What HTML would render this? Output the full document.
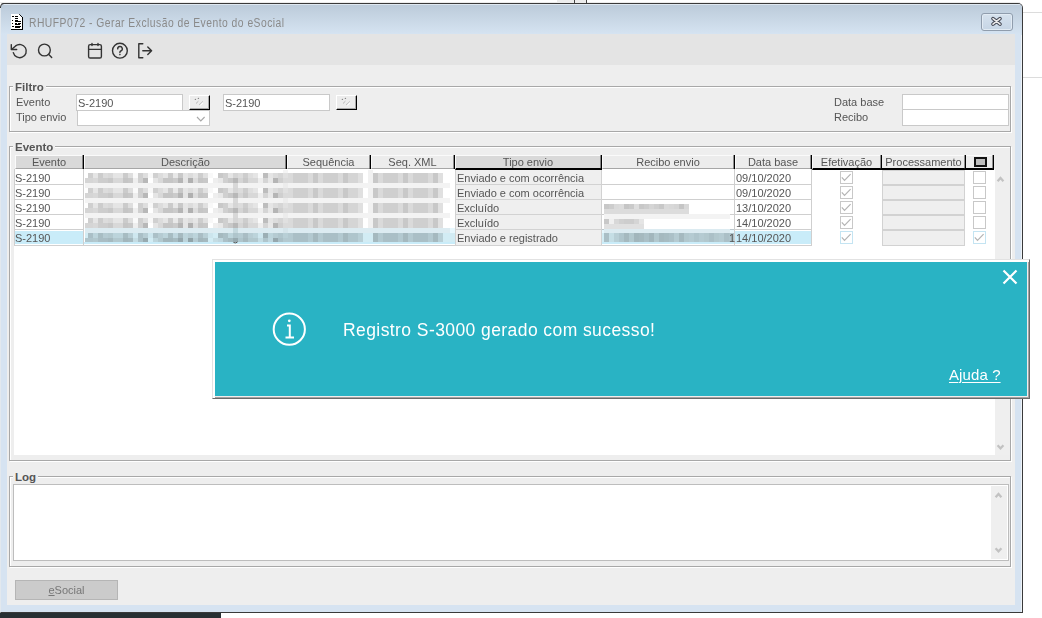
<!DOCTYPE html>
<html><head><meta charset="utf-8">
<style>
*{margin:0;padding:0;box-sizing:border-box}
html,body{width:1042px;height:618px;overflow:hidden;background:#fff;font-family:"Liberation Sans",sans-serif;position:relative}
div,span{position:absolute}
.t{font-size:11px;color:#555;white-space:nowrap;line-height:13px}
.b{font-weight:bold}
.ln{background:#a8a8a8}
.wl{background:#fff}
.inp{background:#fff;border:1px solid #c9c9c9}
.hd{z-index:1;top:155px;height:14px;background:#d9d9d9;border-top:1px solid #fafafa;border-left:1px solid #fafafa;border-bottom:1px solid #a6a6a6;box-shadow:inset -1px 0 0 #bdbdbd}
.hl{background:#ececec}
.sep{z-index:2;top:155px;width:1px;height:14px;background:#000;box-shadow:-0.5px 0 0 #333}
.hx{z-index:3;top:156px;height:14px;line-height:13px;text-align:center}
.cell{line-height:13px}
</style></head><body>
<!-- outside bits -->
<div style="left:0;top:2px;width:1020px;height:1px;background:#ececec"></div>
<div style="left:1022px;top:12px;width:20px;height:1px;background:#dcdcdc"></div>
<div style="left:1022px;top:77px;width:20px;height:1px;background:#dcdcdc"></div>
<div style="left:557px;top:0;width:17px;height:3px;background:#ececec"></div>
<div style="left:574px;top:0;width:1px;height:3px;background:#444"></div>
<div style="left:575px;top:0;width:11px;height:3px;background:#ececec"></div>
<div style="left:586px;top:0;width:1px;height:3px;background:#444"></div>
<div style="left:0;top:612px;width:221px;height:6px;background:#283033"></div>

<!-- window -->
<div style="left:0;top:3px;width:1023px;height:610px;border:1px solid #3a3a3a;border-left-color:#e2e8ee;border-radius:4px 5px 0 0;background:#d6e3f1;overflow:hidden;box-shadow:inset -1px 0 0 #eef3f8">
  <div style="left:0;top:0;width:1021px;height:31px;background:linear-gradient(#bccbda,#d6e4f2);border-top:1px solid #dfe8f1"></div>
</div>
<svg style="position:absolute;left:0;top:0" width="8" height="10" viewBox="0 0 8 10"><path d="M0.5 8 L0.5 7 Q0.5 3.5 4 3.5 L6 3.5" fill="none" stroke="#3a3a3a" stroke-width="1"/></svg>
<!-- title icon -->
<svg style="position:absolute;left:0;top:0" width="30" height="34" viewBox="0 0 30 34" shape-rendering="crispEdges">
  <path d="M11 14 H19 L22 17 V29 H11 Z" fill="#fff"/>
  <path d="M19.2 14.2 L22.8 17.8" stroke="#111" stroke-width="1" shape-rendering="auto"/>
  <rect x="22" y="17" width="1" height="13" fill="#000"/>
  <rect x="11" y="29" width="12" height="1" fill="#000"/>
  <rect x="12" y="16" width="2" height="1" fill="#000"/><rect x="15" y="16" width="3" height="1" fill="#000"/>
  <rect x="15" y="18" width="3" height="1" fill="#000"/>
  <rect x="12" y="20" width="1" height="1" fill="#000"/><rect x="15" y="20" width="3" height="2" fill="#000"/><rect x="18" y="21" width="3" height="1" fill="#000"/>
  <rect x="12" y="23" width="1" height="1" fill="#000"/><rect x="15" y="23" width="2" height="2" fill="#000"/><rect x="17" y="24" width="1" height="1" fill="#000"/><rect x="18" y="23" width="3" height="1" fill="#000"/><rect x="18" y="24" width="2" height="1" fill="#000"/>
  <rect x="12" y="26" width="2" height="1" fill="#000"/><rect x="15" y="26" width="6" height="1" fill="#000"/><rect x="15" y="27" width="5" height="1" fill="#000"/>
</svg>
<div class="t" style="left:29px;top:16px;font-size:12px;line-height:14px;color:#8a8a8a;letter-spacing:0.56px;transform:scaleX(0.86);transform-origin:0 0">RHUFP072 - Gerar Exclusão de Evento do eSocial</div>
<!-- close btn -->
<div style="left:981px;top:13px;width:32px;height:18px;border:1px solid #909dad;border-radius:3px;background:linear-gradient(#d6e2ee,#c6d5e5);box-shadow:inset 0 0 0 1px #e2ebf4"></div>
<svg style="position:absolute;left:990px;top:16px" width="14" height="12" viewBox="0 0 14 12">
  <path d="M3 2.6 L10 8.2 M10 2.6 L3 8.2" stroke="#3f4350" stroke-width="3.6" stroke-linecap="round"/>
  <path d="M3 2.6 L10 8.2 M10 2.6 L3 8.2" stroke="#ebebeb" stroke-width="1.6" stroke-linecap="round"/>
</svg>
<!-- content -->
<div style="left:7px;top:34px;width:1008px;height:571px;background:#eeeeee"></div>
<div style="left:7px;top:34px;width:1008px;height:31px;background:#e4e4e4"></div>
<!-- toolbar icons -->
<svg style="position:absolute;left:0;top:34px" width="170" height="31" viewBox="0 34 170 31">
  <g fill="none" stroke="#333" stroke-width="1.4" stroke-linecap="round" stroke-linejoin="round">
    <path d="M13.3 52.7 A6.6 6.6 0 1 0 15.6 45.9 L11.8 49.3"/>
    <path d="M11.3 44.6 V49.5 H16.7"/>
    <circle cx="44.4" cy="50" r="5.9"/>
    <path d="M48.8 54.6 L51.7 57.6"/>
    <rect x="88.6" y="44.6" width="12.8" height="13.4" rx="1.6"/>
    <path d="M88.6 49.4 H101.4 M92 43.4 V45.6 M98 43.4 V45.6"/>
    <circle cx="119.9" cy="50.7" r="7.4"/>
    <path d="M117.7 48.9 A2.3 2.3 0 1 1 120.8 51 Q119.9 51.4 119.9 52.6"/>
    <path d="M142.8 43.8 H138.8 V57.8 H142.8"/>
    <path d="M142.8 50.7 H151.6 M147.8 47 L151.6 50.7 L147.8 54.4"/>
  </g>
  <circle cx="119.9" cy="54.6" r="0.8" fill="#333"/>
</svg>

<!-- Filtro group -->
<div style="left:9px;top:86px;width:1002px;height:46px;border:1px solid #a8a8a8;box-shadow:inset 1px 1px 0 #fff, 1px 1px 0 #fff"></div>
<div class="t b" style="left:13px;top:81px;background:#eeeeee;padding:0 2px;font-size:11.5px">Filtro</div>
<div class="t" style="left:16px;top:96px">Evento</div>
<div class="t" style="left:16px;top:111px">Tipo envio</div>
<div class="inp" style="left:76px;top:94px;width:107px;height:17px"></div>
<div class="t" style="left:78px;top:97px">S-2190</div>
<div class="inp" style="left:77px;top:110px;width:133px;height:16px"></div>
<svg style="position:absolute;left:196px;top:116px" width="11" height="7"><path d="M1 1 L4.8 5 L8.6 1" fill="none" stroke="#a8a8a8" stroke-width="1.1"/></svg>
<div style="left:189px;top:95px;width:21px;height:15px;background:#ececec;border-top:1px solid #fff;border-left:1px solid #fff;border-right:1px solid #000;border-bottom:1px solid #000;box-shadow:inset -1px -1px 0 #a8a8a8"></div>
<div class="inp" style="left:223px;top:94px;width:107px;height:17px"></div>
<div class="t" style="left:225px;top:97px">S-2190</div>
<div style="left:336px;top:95px;width:21px;height:15px;background:#ececec;border-top:1px solid #fff;border-left:1px solid #fff;border-right:1px solid #000;border-bottom:1px solid #000;box-shadow:inset -1px -1px 0 #a8a8a8"></div>
<svg style="position:absolute;left:193px;top:97px" width="12" height="10" viewBox="0 0 12 10"><circle cx="2.4" cy="2.4" r="0.7" fill="#888"/><circle cx="5.4" cy="1.4" r="0.7" fill="#888"/><path d="M3 6.5 L5.6 4 M6.4 7.5 L9.6 4.5" stroke="#999" stroke-width="0.9" stroke-dasharray="1 0.6"/><path d="M7.5 8.5 L10 6" stroke="#fff" stroke-width="0.9"/></svg>
<svg style="position:absolute;left:340px;top:97px" width="12" height="10" viewBox="0 0 12 10"><circle cx="2.4" cy="2.4" r="0.7" fill="#888"/><circle cx="5.4" cy="1.4" r="0.7" fill="#888"/><path d="M3 6.5 L5.6 4 M6.4 7.5 L9.6 4.5" stroke="#999" stroke-width="0.9" stroke-dasharray="1 0.6"/><path d="M7.5 8.5 L10 6" stroke="#fff" stroke-width="0.9"/></svg>
<div class="t" style="left:834px;top:96px">Data base</div>
<div class="t" style="left:834px;top:111px">Recibo</div>
<div class="inp" style="left:902px;top:94px;width:107px;height:16px"></div>
<div class="inp" style="left:902px;top:109px;width:107px;height:17px"></div>

<!-- Evento group -->
<div style="left:9px;top:146px;width:1002px;height:315px;border:1px solid #a8a8a8;box-shadow:inset 1px 1px 0 #fff, 1px 1px 0 #fff"></div>
<div class="t b" style="left:13px;top:141px;background:#eeeeee;padding:0 2px;font-size:11.5px">Evento</div>
<!-- table white area -->
<div style="left:14px;top:169px;width:981px;height:286px;background:#fff"></div>
<!-- scrollbar -->
<div style="left:995px;top:170px;width:15px;height:285px;background:#efefef"></div>
<svg style="position:absolute;left:996px;top:175px" width="10" height="9"><path d="M1.6 6.2 L4.5 3 L7.4 6.2" fill="none" stroke="#c2c2c2" stroke-width="2.3"/></svg>
<svg style="position:absolute;left:996px;top:443px" width="10" height="9"><path d="M1.6 2.2 L4.5 5.4 L7.4 2.2" fill="none" stroke="#c2c2c2" stroke-width="2.3"/></svg>

<!-- header -->
<div class="hd" style="left:15px;width:69px"></div>
<div class="hd" style="left:84px;width:203px"></div>
<div class="hd hl" style="left:287px;width:84px"></div>
<div class="hd hl" style="left:371px;width:84px"></div>
<div class="hd" style="left:455px;width:147px;height:15px;border-bottom:2px solid #000"></div>
<div class="hd hl" style="left:602px;width:133px"></div>
<div class="hd hl" style="left:735px;width:77px"></div>
<div class="hd hl" style="left:812px;width:182px;height:15px;border-bottom:2px solid #000"></div>
<div class="sep" style="left:83px"></div>
<div class="sep" style="left:286px"></div>
<div class="sep" style="left:370px"></div>
<div class="sep" style="left:454px"></div>
<div class="sep" style="left:601px"></div>
<div class="sep" style="left:734px"></div>
<div class="sep" style="left:811px"></div>
<div class="sep" style="left:881px"></div>
<div class="sep" style="left:965px"></div>
<div class="sep" style="left:993px"></div>
<div style="z-index:3;left:974px;top:157px;width:13px;height:10px;border:2px solid #111;background:#bdbdbd"></div>
<div class="t hx" style="left:15px;width:68px">Evento</div>
<div class="t hx" style="left:85px;width:201px">Descrição</div>
<div class="t hx" style="left:287px;width:83px">Sequência</div>
<div class="t hx" style="left:371px;width:83px">Seq. XML</div>
<div class="t hx" style="left:455px;width:146px">Tipo envio</div>
<div class="t hx" style="left:602px;width:132px">Recibo envio</div>
<div class="t hx" style="left:735px;width:76px">Data base</div>
<div class="t hx" style="left:812px;width:69px">Efetivação</div>
<div class="t hx" style="left:882px;width:83px">Processamento</div>

<!--ROWS-->
<svg style="position:absolute;left:0;top:0" width="1042" height="260" viewBox="0 0 1042 260">
<rect x="14" y="184" width="70" height="1" fill="#cfcfcf"/>
<rect x="602" y="184" width="210" height="1" fill="#cfcfcf"/>
<rect x="14" y="199" width="70" height="1" fill="#cfcfcf"/>
<rect x="602" y="199" width="210" height="1" fill="#cfcfcf"/>
<rect x="14" y="214" width="70" height="1" fill="#cfcfcf"/>
<rect x="602" y="214" width="210" height="1" fill="#cfcfcf"/>
<rect x="14" y="229" width="70" height="1" fill="#cfcfcf"/>
<rect x="602" y="229" width="210" height="1" fill="#cfcfcf"/>
<rect x="14" y="245" width="70" height="1" fill="#cfcfcf"/>
<rect x="602" y="245" width="210" height="1" fill="#cfcfcf"/>
<rect x="14" y="169" width="1" height="77" fill="#cfcfcf"/>
<rect x="83" y="169" width="1" height="77" fill="#cfcfcf"/>
<rect x="601" y="169" width="1" height="77" fill="#cfcfcf"/>
<rect x="734" y="169" width="1" height="77" fill="#cfcfcf"/>
<rect x="811" y="169" width="1" height="77" fill="#cfcfcf"/>
<rect x="368" y="170" width="5" height="59" fill="#f1f1f1"/>
<rect x="283" y="170" width="5" height="59" fill="#f4f4f4"/>
<rect x="85" y="173" width="3" height="5" fill="#ffffff"/>
<rect x="88" y="173" width="5" height="5" fill="#cfcfcf"/>
<rect x="93" y="173" width="5" height="5" fill="#e5e5e5"/>
<rect x="98" y="173" width="5" height="5" fill="#cccccc"/>
<rect x="103" y="173" width="5" height="5" fill="#dcdcdc"/>
<rect x="108" y="173" width="5" height="5" fill="#d8d8d8"/>
<rect x="113" y="173" width="5" height="5" fill="#e5e5e5"/>
<rect x="118" y="173" width="5" height="5" fill="#e5e5e5"/>
<rect x="123" y="173" width="5" height="5" fill="#cbcbcb"/>
<rect x="128" y="173" width="5" height="5" fill="#dedede"/>
<rect x="133" y="173" width="5" height="5" fill="#fafafa"/>
<rect x="138" y="173" width="5" height="5" fill="#cfcfcf"/>
<rect x="143" y="173" width="5" height="5" fill="#dedede"/>
<rect x="148" y="173" width="5" height="5" fill="#f8f8f8"/>
<rect x="153" y="173" width="5" height="5" fill="#d0d0d0"/>
<rect x="158" y="173" width="5" height="5" fill="#dcdcdc"/>
<rect x="163" y="173" width="5" height="5" fill="#e5e5e5"/>
<rect x="168" y="173" width="5" height="5" fill="#cbcbcb"/>
<rect x="173" y="173" width="5" height="5" fill="#e8e8e8"/>
<rect x="178" y="173" width="5" height="5" fill="#c8c8c8"/>
<rect x="183" y="173" width="5" height="5" fill="#e5e5e5"/>
<rect x="188" y="173" width="5" height="5" fill="#dcdcdc"/>
<rect x="193" y="173" width="5" height="5" fill="#e5e5e5"/>
<rect x="198" y="173" width="5" height="5" fill="#cdcdcd"/>
<rect x="203" y="173" width="5" height="5" fill="#e0e0e0"/>
<rect x="208" y="173" width="5" height="5" fill="#f8f8f8"/>
<rect x="213" y="173" width="5" height="5" fill="#ffffff"/>
<rect x="218" y="173" width="5" height="5" fill="#c8c8c8"/>
<rect x="223" y="173" width="5" height="5" fill="#cfcfcf"/>
<rect x="228" y="173" width="5" height="5" fill="#e5e5e5"/>
<rect x="233" y="173" width="5" height="5" fill="#d5d5d5"/>
<rect x="238" y="173" width="5" height="5" fill="#dcdcdc"/>
<rect x="243" y="173" width="5" height="5" fill="#cdcdcd"/>
<rect x="248" y="173" width="5" height="5" fill="#dedede"/>
<rect x="253" y="173" width="5" height="5" fill="#e5e5e5"/>
<rect x="258" y="173" width="5" height="5" fill="#fafafa"/>
<rect x="263" y="173" width="5" height="5" fill="#bdbdbd"/>
<rect x="268" y="173" width="5" height="5" fill="#e5e5e5"/>
<rect x="273" y="173" width="5" height="5" fill="#dcdcdc"/>
<rect x="278" y="173" width="5" height="5" fill="#d5d5d5"/>
<rect x="85" y="178" width="3" height="5" fill="#d5d5d5"/>
<rect x="88" y="178" width="5" height="5" fill="#d5d5d5"/>
<rect x="93" y="178" width="5" height="5" fill="#d8d8d8"/>
<rect x="98" y="178" width="5" height="5" fill="#cdcdcd"/>
<rect x="103" y="178" width="5" height="5" fill="#cdcdcd"/>
<rect x="108" y="178" width="5" height="5" fill="#c8c8c8"/>
<rect x="113" y="178" width="5" height="5" fill="#d8d8d8"/>
<rect x="118" y="178" width="5" height="5" fill="#d8d8d8"/>
<rect x="123" y="178" width="5" height="5" fill="#c5c5c5"/>
<rect x="128" y="178" width="5" height="5" fill="#c8c8c8"/>
<rect x="133" y="178" width="5" height="5" fill="#eeeeee"/>
<rect x="138" y="178" width="5" height="5" fill="#d0d0d0"/>
<rect x="143" y="178" width="5" height="5" fill="#b8b8b8"/>
<rect x="148" y="178" width="5" height="5" fill="#ffffff"/>
<rect x="153" y="178" width="5" height="5" fill="#e5e5e5"/>
<rect x="158" y="178" width="5" height="5" fill="#d8d8d8"/>
<rect x="163" y="178" width="5" height="5" fill="#c5c5c5"/>
<rect x="168" y="178" width="5" height="5" fill="#c5c5c5"/>
<rect x="173" y="178" width="5" height="5" fill="#cbcbcb"/>
<rect x="178" y="178" width="5" height="5" fill="#b5b5b5"/>
<rect x="183" y="178" width="5" height="5" fill="#e5e5e5"/>
<rect x="188" y="178" width="5" height="5" fill="#b0b0b0"/>
<rect x="193" y="178" width="5" height="5" fill="#dcdcdc"/>
<rect x="198" y="178" width="5" height="5" fill="#c5c5c5"/>
<rect x="203" y="178" width="5" height="5" fill="#c8c8c8"/>
<rect x="208" y="178" width="5" height="5" fill="#ffffff"/>
<rect x="213" y="178" width="5" height="5" fill="#eeeeee"/>
<rect x="218" y="178" width="5" height="5" fill="#e8e8e8"/>
<rect x="223" y="178" width="5" height="5" fill="#d0d0d0"/>
<rect x="228" y="178" width="5" height="5" fill="#c8c8c8"/>
<rect x="233" y="178" width="5" height="5" fill="#b8b8b8"/>
<rect x="238" y="178" width="5" height="5" fill="#d5d5d5"/>
<rect x="243" y="178" width="5" height="5" fill="#c8c8c8"/>
<rect x="248" y="178" width="5" height="5" fill="#d8d8d8"/>
<rect x="253" y="178" width="5" height="5" fill="#d8d8d8"/>
<rect x="258" y="178" width="5" height="5" fill="#eeeeee"/>
<rect x="263" y="178" width="5" height="5" fill="#d5d5d5"/>
<rect x="268" y="178" width="5" height="5" fill="#e8e8e8"/>
<rect x="273" y="178" width="5" height="5" fill="#b5b5b5"/>
<rect x="278" y="178" width="5" height="5" fill="#cfcfcf"/>
<rect x="283" y="173" width="5" height="5" fill="#e0e0e0"/>
<rect x="283" y="178" width="5" height="5" fill="#dadada"/>
<rect x="288" y="173" width="5" height="10" fill="#dadada"/>
<rect x="293" y="173" width="15" height="10" fill="#cfcfcf"/>
<rect x="308" y="173" width="5" height="10" fill="#dadada"/>
<rect x="313" y="173" width="5" height="10" fill="#c8c8c8"/>
<rect x="318" y="173" width="5" height="10" fill="#dadada"/>
<rect x="323" y="173" width="15" height="10" fill="#cfcfcf"/>
<rect x="338" y="173" width="5" height="10" fill="#dadada"/>
<rect x="343" y="173" width="5" height="10" fill="#c8c8c8"/>
<rect x="348" y="173" width="10" height="10" fill="#d5d5d5"/>
<rect x="358" y="173" width="5" height="10" fill="#e0e0e0"/>
<rect x="373" y="173" width="5" height="10" fill="#c8c8c8"/>
<rect x="378" y="173" width="5" height="10" fill="#dadada"/>
<rect x="383" y="173" width="15" height="10" fill="#cfcfcf"/>
<rect x="398" y="173" width="5" height="10" fill="#dadada"/>
<rect x="403" y="173" width="5" height="10" fill="#c8c8c8"/>
<rect x="408" y="173" width="5" height="10" fill="#dadada"/>
<rect x="413" y="173" width="15" height="10" fill="#cfcfcf"/>
<rect x="428" y="173" width="5" height="10" fill="#dadada"/>
<rect x="433" y="173" width="5" height="10" fill="#c8c8c8"/>
<rect x="438" y="173" width="5" height="10" fill="#e0e0e0"/>
<rect x="85" y="183" width="365" height="5" fill="#f3f3f3"/>
<rect x="233" y="183" width="5" height="5" fill="#d8d8d8"/>
<rect x="283" y="183" width="5" height="5" fill="#ececec"/>
<rect x="85" y="188" width="3" height="5" fill="#ffffff"/>
<rect x="88" y="188" width="5" height="5" fill="#cfcfcf"/>
<rect x="93" y="188" width="5" height="5" fill="#e5e5e5"/>
<rect x="98" y="188" width="5" height="5" fill="#cccccc"/>
<rect x="103" y="188" width="5" height="5" fill="#dcdcdc"/>
<rect x="108" y="188" width="5" height="5" fill="#d8d8d8"/>
<rect x="113" y="188" width="5" height="5" fill="#e5e5e5"/>
<rect x="118" y="188" width="5" height="5" fill="#e5e5e5"/>
<rect x="123" y="188" width="5" height="5" fill="#cbcbcb"/>
<rect x="128" y="188" width="5" height="5" fill="#dedede"/>
<rect x="133" y="188" width="5" height="5" fill="#fafafa"/>
<rect x="138" y="188" width="5" height="5" fill="#cfcfcf"/>
<rect x="143" y="188" width="5" height="5" fill="#dedede"/>
<rect x="148" y="188" width="5" height="5" fill="#f8f8f8"/>
<rect x="153" y="188" width="5" height="5" fill="#d0d0d0"/>
<rect x="158" y="188" width="5" height="5" fill="#dcdcdc"/>
<rect x="163" y="188" width="5" height="5" fill="#e5e5e5"/>
<rect x="168" y="188" width="5" height="5" fill="#cbcbcb"/>
<rect x="173" y="188" width="5" height="5" fill="#e8e8e8"/>
<rect x="178" y="188" width="5" height="5" fill="#c8c8c8"/>
<rect x="183" y="188" width="5" height="5" fill="#e5e5e5"/>
<rect x="188" y="188" width="5" height="5" fill="#dcdcdc"/>
<rect x="193" y="188" width="5" height="5" fill="#e5e5e5"/>
<rect x="198" y="188" width="5" height="5" fill="#cdcdcd"/>
<rect x="203" y="188" width="5" height="5" fill="#e0e0e0"/>
<rect x="208" y="188" width="5" height="5" fill="#f8f8f8"/>
<rect x="213" y="188" width="5" height="5" fill="#ffffff"/>
<rect x="218" y="188" width="5" height="5" fill="#c8c8c8"/>
<rect x="223" y="188" width="5" height="5" fill="#cfcfcf"/>
<rect x="228" y="188" width="5" height="5" fill="#e5e5e5"/>
<rect x="233" y="188" width="5" height="5" fill="#d5d5d5"/>
<rect x="238" y="188" width="5" height="5" fill="#dcdcdc"/>
<rect x="243" y="188" width="5" height="5" fill="#cdcdcd"/>
<rect x="248" y="188" width="5" height="5" fill="#dedede"/>
<rect x="253" y="188" width="5" height="5" fill="#e5e5e5"/>
<rect x="258" y="188" width="5" height="5" fill="#fafafa"/>
<rect x="263" y="188" width="5" height="5" fill="#bdbdbd"/>
<rect x="268" y="188" width="5" height="5" fill="#e5e5e5"/>
<rect x="273" y="188" width="5" height="5" fill="#dcdcdc"/>
<rect x="278" y="188" width="5" height="5" fill="#d5d5d5"/>
<rect x="85" y="193" width="3" height="5" fill="#d5d5d5"/>
<rect x="88" y="193" width="5" height="5" fill="#d5d5d5"/>
<rect x="93" y="193" width="5" height="5" fill="#d8d8d8"/>
<rect x="98" y="193" width="5" height="5" fill="#cdcdcd"/>
<rect x="103" y="193" width="5" height="5" fill="#cdcdcd"/>
<rect x="108" y="193" width="5" height="5" fill="#c8c8c8"/>
<rect x="113" y="193" width="5" height="5" fill="#d8d8d8"/>
<rect x="118" y="193" width="5" height="5" fill="#d8d8d8"/>
<rect x="123" y="193" width="5" height="5" fill="#c5c5c5"/>
<rect x="128" y="193" width="5" height="5" fill="#c8c8c8"/>
<rect x="133" y="193" width="5" height="5" fill="#eeeeee"/>
<rect x="138" y="193" width="5" height="5" fill="#d0d0d0"/>
<rect x="143" y="193" width="5" height="5" fill="#b8b8b8"/>
<rect x="148" y="193" width="5" height="5" fill="#ffffff"/>
<rect x="153" y="193" width="5" height="5" fill="#e5e5e5"/>
<rect x="158" y="193" width="5" height="5" fill="#d8d8d8"/>
<rect x="163" y="193" width="5" height="5" fill="#c5c5c5"/>
<rect x="168" y="193" width="5" height="5" fill="#c5c5c5"/>
<rect x="173" y="193" width="5" height="5" fill="#cbcbcb"/>
<rect x="178" y="193" width="5" height="5" fill="#b5b5b5"/>
<rect x="183" y="193" width="5" height="5" fill="#e5e5e5"/>
<rect x="188" y="193" width="5" height="5" fill="#b0b0b0"/>
<rect x="193" y="193" width="5" height="5" fill="#dcdcdc"/>
<rect x="198" y="193" width="5" height="5" fill="#c5c5c5"/>
<rect x="203" y="193" width="5" height="5" fill="#c8c8c8"/>
<rect x="208" y="193" width="5" height="5" fill="#ffffff"/>
<rect x="213" y="193" width="5" height="5" fill="#eeeeee"/>
<rect x="218" y="193" width="5" height="5" fill="#e8e8e8"/>
<rect x="223" y="193" width="5" height="5" fill="#d0d0d0"/>
<rect x="228" y="193" width="5" height="5" fill="#c8c8c8"/>
<rect x="233" y="193" width="5" height="5" fill="#b8b8b8"/>
<rect x="238" y="193" width="5" height="5" fill="#d5d5d5"/>
<rect x="243" y="193" width="5" height="5" fill="#c8c8c8"/>
<rect x="248" y="193" width="5" height="5" fill="#d8d8d8"/>
<rect x="253" y="193" width="5" height="5" fill="#d8d8d8"/>
<rect x="258" y="193" width="5" height="5" fill="#eeeeee"/>
<rect x="263" y="193" width="5" height="5" fill="#d5d5d5"/>
<rect x="268" y="193" width="5" height="5" fill="#e8e8e8"/>
<rect x="273" y="193" width="5" height="5" fill="#b5b5b5"/>
<rect x="278" y="193" width="5" height="5" fill="#cfcfcf"/>
<rect x="283" y="188" width="5" height="5" fill="#e0e0e0"/>
<rect x="283" y="193" width="5" height="5" fill="#dadada"/>
<rect x="288" y="188" width="5" height="10" fill="#dadada"/>
<rect x="293" y="188" width="15" height="10" fill="#cfcfcf"/>
<rect x="308" y="188" width="5" height="10" fill="#dadada"/>
<rect x="313" y="188" width="5" height="10" fill="#c8c8c8"/>
<rect x="318" y="188" width="5" height="10" fill="#dadada"/>
<rect x="323" y="188" width="15" height="10" fill="#cfcfcf"/>
<rect x="338" y="188" width="5" height="10" fill="#dadada"/>
<rect x="343" y="188" width="5" height="10" fill="#c8c8c8"/>
<rect x="348" y="188" width="10" height="10" fill="#d5d5d5"/>
<rect x="358" y="188" width="5" height="10" fill="#e0e0e0"/>
<rect x="373" y="188" width="5" height="10" fill="#c8c8c8"/>
<rect x="378" y="188" width="5" height="10" fill="#dadada"/>
<rect x="383" y="188" width="15" height="10" fill="#cfcfcf"/>
<rect x="398" y="188" width="5" height="10" fill="#dadada"/>
<rect x="403" y="188" width="5" height="10" fill="#c8c8c8"/>
<rect x="408" y="188" width="5" height="10" fill="#dadada"/>
<rect x="413" y="188" width="15" height="10" fill="#cfcfcf"/>
<rect x="428" y="188" width="5" height="10" fill="#dadada"/>
<rect x="433" y="188" width="5" height="10" fill="#c8c8c8"/>
<rect x="438" y="188" width="5" height="10" fill="#e0e0e0"/>
<rect x="85" y="198" width="365" height="5" fill="#f3f3f3"/>
<rect x="233" y="198" width="5" height="5" fill="#d8d8d8"/>
<rect x="283" y="198" width="5" height="5" fill="#ececec"/>
<rect x="85" y="203" width="3" height="5" fill="#ffffff"/>
<rect x="88" y="203" width="5" height="5" fill="#cfcfcf"/>
<rect x="93" y="203" width="5" height="5" fill="#e5e5e5"/>
<rect x="98" y="203" width="5" height="5" fill="#cccccc"/>
<rect x="103" y="203" width="5" height="5" fill="#dcdcdc"/>
<rect x="108" y="203" width="5" height="5" fill="#d8d8d8"/>
<rect x="113" y="203" width="5" height="5" fill="#e5e5e5"/>
<rect x="118" y="203" width="5" height="5" fill="#e5e5e5"/>
<rect x="123" y="203" width="5" height="5" fill="#cbcbcb"/>
<rect x="128" y="203" width="5" height="5" fill="#dedede"/>
<rect x="133" y="203" width="5" height="5" fill="#fafafa"/>
<rect x="138" y="203" width="5" height="5" fill="#cfcfcf"/>
<rect x="143" y="203" width="5" height="5" fill="#dedede"/>
<rect x="148" y="203" width="5" height="5" fill="#f8f8f8"/>
<rect x="153" y="203" width="5" height="5" fill="#d0d0d0"/>
<rect x="158" y="203" width="5" height="5" fill="#dcdcdc"/>
<rect x="163" y="203" width="5" height="5" fill="#e5e5e5"/>
<rect x="168" y="203" width="5" height="5" fill="#cbcbcb"/>
<rect x="173" y="203" width="5" height="5" fill="#e8e8e8"/>
<rect x="178" y="203" width="5" height="5" fill="#c8c8c8"/>
<rect x="183" y="203" width="5" height="5" fill="#e5e5e5"/>
<rect x="188" y="203" width="5" height="5" fill="#dcdcdc"/>
<rect x="193" y="203" width="5" height="5" fill="#e5e5e5"/>
<rect x="198" y="203" width="5" height="5" fill="#cdcdcd"/>
<rect x="203" y="203" width="5" height="5" fill="#e0e0e0"/>
<rect x="208" y="203" width="5" height="5" fill="#f8f8f8"/>
<rect x="213" y="203" width="5" height="5" fill="#ffffff"/>
<rect x="218" y="203" width="5" height="5" fill="#c8c8c8"/>
<rect x="223" y="203" width="5" height="5" fill="#cfcfcf"/>
<rect x="228" y="203" width="5" height="5" fill="#e5e5e5"/>
<rect x="233" y="203" width="5" height="5" fill="#d5d5d5"/>
<rect x="238" y="203" width="5" height="5" fill="#dcdcdc"/>
<rect x="243" y="203" width="5" height="5" fill="#cdcdcd"/>
<rect x="248" y="203" width="5" height="5" fill="#dedede"/>
<rect x="253" y="203" width="5" height="5" fill="#e5e5e5"/>
<rect x="258" y="203" width="5" height="5" fill="#fafafa"/>
<rect x="263" y="203" width="5" height="5" fill="#bdbdbd"/>
<rect x="268" y="203" width="5" height="5" fill="#e5e5e5"/>
<rect x="273" y="203" width="5" height="5" fill="#dcdcdc"/>
<rect x="278" y="203" width="5" height="5" fill="#d5d5d5"/>
<rect x="85" y="208" width="3" height="5" fill="#d5d5d5"/>
<rect x="88" y="208" width="5" height="5" fill="#d5d5d5"/>
<rect x="93" y="208" width="5" height="5" fill="#d8d8d8"/>
<rect x="98" y="208" width="5" height="5" fill="#cdcdcd"/>
<rect x="103" y="208" width="5" height="5" fill="#cdcdcd"/>
<rect x="108" y="208" width="5" height="5" fill="#c8c8c8"/>
<rect x="113" y="208" width="5" height="5" fill="#d8d8d8"/>
<rect x="118" y="208" width="5" height="5" fill="#d8d8d8"/>
<rect x="123" y="208" width="5" height="5" fill="#c5c5c5"/>
<rect x="128" y="208" width="5" height="5" fill="#c8c8c8"/>
<rect x="133" y="208" width="5" height="5" fill="#eeeeee"/>
<rect x="138" y="208" width="5" height="5" fill="#d0d0d0"/>
<rect x="143" y="208" width="5" height="5" fill="#b8b8b8"/>
<rect x="148" y="208" width="5" height="5" fill="#ffffff"/>
<rect x="153" y="208" width="5" height="5" fill="#e5e5e5"/>
<rect x="158" y="208" width="5" height="5" fill="#d8d8d8"/>
<rect x="163" y="208" width="5" height="5" fill="#c5c5c5"/>
<rect x="168" y="208" width="5" height="5" fill="#c5c5c5"/>
<rect x="173" y="208" width="5" height="5" fill="#cbcbcb"/>
<rect x="178" y="208" width="5" height="5" fill="#b5b5b5"/>
<rect x="183" y="208" width="5" height="5" fill="#e5e5e5"/>
<rect x="188" y="208" width="5" height="5" fill="#b0b0b0"/>
<rect x="193" y="208" width="5" height="5" fill="#dcdcdc"/>
<rect x="198" y="208" width="5" height="5" fill="#c5c5c5"/>
<rect x="203" y="208" width="5" height="5" fill="#c8c8c8"/>
<rect x="208" y="208" width="5" height="5" fill="#ffffff"/>
<rect x="213" y="208" width="5" height="5" fill="#eeeeee"/>
<rect x="218" y="208" width="5" height="5" fill="#e8e8e8"/>
<rect x="223" y="208" width="5" height="5" fill="#d0d0d0"/>
<rect x="228" y="208" width="5" height="5" fill="#c8c8c8"/>
<rect x="233" y="208" width="5" height="5" fill="#b8b8b8"/>
<rect x="238" y="208" width="5" height="5" fill="#d5d5d5"/>
<rect x="243" y="208" width="5" height="5" fill="#c8c8c8"/>
<rect x="248" y="208" width="5" height="5" fill="#d8d8d8"/>
<rect x="253" y="208" width="5" height="5" fill="#d8d8d8"/>
<rect x="258" y="208" width="5" height="5" fill="#eeeeee"/>
<rect x="263" y="208" width="5" height="5" fill="#d5d5d5"/>
<rect x="268" y="208" width="5" height="5" fill="#e8e8e8"/>
<rect x="273" y="208" width="5" height="5" fill="#b5b5b5"/>
<rect x="278" y="208" width="5" height="5" fill="#cfcfcf"/>
<rect x="283" y="203" width="5" height="5" fill="#e0e0e0"/>
<rect x="283" y="208" width="5" height="5" fill="#dadada"/>
<rect x="288" y="203" width="5" height="10" fill="#dadada"/>
<rect x="293" y="203" width="15" height="10" fill="#cfcfcf"/>
<rect x="308" y="203" width="5" height="10" fill="#dadada"/>
<rect x="313" y="203" width="5" height="10" fill="#c8c8c8"/>
<rect x="318" y="203" width="5" height="10" fill="#dadada"/>
<rect x="323" y="203" width="15" height="10" fill="#cfcfcf"/>
<rect x="338" y="203" width="5" height="10" fill="#dadada"/>
<rect x="343" y="203" width="5" height="10" fill="#c8c8c8"/>
<rect x="348" y="203" width="10" height="10" fill="#d5d5d5"/>
<rect x="358" y="203" width="5" height="10" fill="#e0e0e0"/>
<rect x="373" y="203" width="5" height="10" fill="#c8c8c8"/>
<rect x="378" y="203" width="5" height="10" fill="#dadada"/>
<rect x="383" y="203" width="15" height="10" fill="#cfcfcf"/>
<rect x="398" y="203" width="5" height="10" fill="#dadada"/>
<rect x="403" y="203" width="5" height="10" fill="#c8c8c8"/>
<rect x="408" y="203" width="5" height="10" fill="#dadada"/>
<rect x="413" y="203" width="15" height="10" fill="#cfcfcf"/>
<rect x="428" y="203" width="5" height="10" fill="#dadada"/>
<rect x="433" y="203" width="5" height="10" fill="#c8c8c8"/>
<rect x="438" y="203" width="5" height="10" fill="#e0e0e0"/>
<rect x="85" y="213" width="365" height="5" fill="#f3f3f3"/>
<rect x="233" y="213" width="5" height="5" fill="#d8d8d8"/>
<rect x="283" y="213" width="5" height="5" fill="#ececec"/>
<rect x="85" y="218" width="3" height="5" fill="#ffffff"/>
<rect x="88" y="218" width="5" height="5" fill="#cfcfcf"/>
<rect x="93" y="218" width="5" height="5" fill="#e5e5e5"/>
<rect x="98" y="218" width="5" height="5" fill="#cccccc"/>
<rect x="103" y="218" width="5" height="5" fill="#dcdcdc"/>
<rect x="108" y="218" width="5" height="5" fill="#d8d8d8"/>
<rect x="113" y="218" width="5" height="5" fill="#e5e5e5"/>
<rect x="118" y="218" width="5" height="5" fill="#e5e5e5"/>
<rect x="123" y="218" width="5" height="5" fill="#cbcbcb"/>
<rect x="128" y="218" width="5" height="5" fill="#dedede"/>
<rect x="133" y="218" width="5" height="5" fill="#fafafa"/>
<rect x="138" y="218" width="5" height="5" fill="#cfcfcf"/>
<rect x="143" y="218" width="5" height="5" fill="#dedede"/>
<rect x="148" y="218" width="5" height="5" fill="#f8f8f8"/>
<rect x="153" y="218" width="5" height="5" fill="#d0d0d0"/>
<rect x="158" y="218" width="5" height="5" fill="#dcdcdc"/>
<rect x="163" y="218" width="5" height="5" fill="#e5e5e5"/>
<rect x="168" y="218" width="5" height="5" fill="#cbcbcb"/>
<rect x="173" y="218" width="5" height="5" fill="#e8e8e8"/>
<rect x="178" y="218" width="5" height="5" fill="#c8c8c8"/>
<rect x="183" y="218" width="5" height="5" fill="#e5e5e5"/>
<rect x="188" y="218" width="5" height="5" fill="#dcdcdc"/>
<rect x="193" y="218" width="5" height="5" fill="#e5e5e5"/>
<rect x="198" y="218" width="5" height="5" fill="#cdcdcd"/>
<rect x="203" y="218" width="5" height="5" fill="#e0e0e0"/>
<rect x="208" y="218" width="5" height="5" fill="#f8f8f8"/>
<rect x="213" y="218" width="5" height="5" fill="#ffffff"/>
<rect x="218" y="218" width="5" height="5" fill="#c8c8c8"/>
<rect x="223" y="218" width="5" height="5" fill="#cfcfcf"/>
<rect x="228" y="218" width="5" height="5" fill="#e5e5e5"/>
<rect x="233" y="218" width="5" height="5" fill="#d5d5d5"/>
<rect x="238" y="218" width="5" height="5" fill="#dcdcdc"/>
<rect x="243" y="218" width="5" height="5" fill="#cdcdcd"/>
<rect x="248" y="218" width="5" height="5" fill="#dedede"/>
<rect x="253" y="218" width="5" height="5" fill="#e5e5e5"/>
<rect x="258" y="218" width="5" height="5" fill="#fafafa"/>
<rect x="263" y="218" width="5" height="5" fill="#bdbdbd"/>
<rect x="268" y="218" width="5" height="5" fill="#e5e5e5"/>
<rect x="273" y="218" width="5" height="5" fill="#dcdcdc"/>
<rect x="278" y="218" width="5" height="5" fill="#d5d5d5"/>
<rect x="85" y="223" width="3" height="5" fill="#d5d5d5"/>
<rect x="88" y="223" width="5" height="5" fill="#d5d5d5"/>
<rect x="93" y="223" width="5" height="5" fill="#d8d8d8"/>
<rect x="98" y="223" width="5" height="5" fill="#cdcdcd"/>
<rect x="103" y="223" width="5" height="5" fill="#cdcdcd"/>
<rect x="108" y="223" width="5" height="5" fill="#c8c8c8"/>
<rect x="113" y="223" width="5" height="5" fill="#d8d8d8"/>
<rect x="118" y="223" width="5" height="5" fill="#d8d8d8"/>
<rect x="123" y="223" width="5" height="5" fill="#c5c5c5"/>
<rect x="128" y="223" width="5" height="5" fill="#c8c8c8"/>
<rect x="133" y="223" width="5" height="5" fill="#eeeeee"/>
<rect x="138" y="223" width="5" height="5" fill="#d0d0d0"/>
<rect x="143" y="223" width="5" height="5" fill="#b8b8b8"/>
<rect x="148" y="223" width="5" height="5" fill="#ffffff"/>
<rect x="153" y="223" width="5" height="5" fill="#e5e5e5"/>
<rect x="158" y="223" width="5" height="5" fill="#d8d8d8"/>
<rect x="163" y="223" width="5" height="5" fill="#c5c5c5"/>
<rect x="168" y="223" width="5" height="5" fill="#c5c5c5"/>
<rect x="173" y="223" width="5" height="5" fill="#cbcbcb"/>
<rect x="178" y="223" width="5" height="5" fill="#b5b5b5"/>
<rect x="183" y="223" width="5" height="5" fill="#e5e5e5"/>
<rect x="188" y="223" width="5" height="5" fill="#b0b0b0"/>
<rect x="193" y="223" width="5" height="5" fill="#dcdcdc"/>
<rect x="198" y="223" width="5" height="5" fill="#c5c5c5"/>
<rect x="203" y="223" width="5" height="5" fill="#c8c8c8"/>
<rect x="208" y="223" width="5" height="5" fill="#ffffff"/>
<rect x="213" y="223" width="5" height="5" fill="#eeeeee"/>
<rect x="218" y="223" width="5" height="5" fill="#e8e8e8"/>
<rect x="223" y="223" width="5" height="5" fill="#d0d0d0"/>
<rect x="228" y="223" width="5" height="5" fill="#c8c8c8"/>
<rect x="233" y="223" width="5" height="5" fill="#b8b8b8"/>
<rect x="238" y="223" width="5" height="5" fill="#d5d5d5"/>
<rect x="243" y="223" width="5" height="5" fill="#c8c8c8"/>
<rect x="248" y="223" width="5" height="5" fill="#d8d8d8"/>
<rect x="253" y="223" width="5" height="5" fill="#d8d8d8"/>
<rect x="258" y="223" width="5" height="5" fill="#eeeeee"/>
<rect x="263" y="223" width="5" height="5" fill="#d5d5d5"/>
<rect x="268" y="223" width="5" height="5" fill="#e8e8e8"/>
<rect x="273" y="223" width="5" height="5" fill="#b5b5b5"/>
<rect x="278" y="223" width="5" height="5" fill="#cfcfcf"/>
<rect x="283" y="218" width="5" height="5" fill="#e0e0e0"/>
<rect x="283" y="223" width="5" height="5" fill="#dadada"/>
<rect x="288" y="218" width="5" height="10" fill="#dadada"/>
<rect x="293" y="218" width="15" height="10" fill="#cfcfcf"/>
<rect x="308" y="218" width="5" height="10" fill="#dadada"/>
<rect x="313" y="218" width="5" height="10" fill="#c8c8c8"/>
<rect x="318" y="218" width="5" height="10" fill="#dadada"/>
<rect x="323" y="218" width="15" height="10" fill="#cfcfcf"/>
<rect x="338" y="218" width="5" height="10" fill="#dadada"/>
<rect x="343" y="218" width="5" height="10" fill="#c8c8c8"/>
<rect x="348" y="218" width="10" height="10" fill="#d5d5d5"/>
<rect x="358" y="218" width="5" height="10" fill="#e0e0e0"/>
<rect x="373" y="218" width="5" height="10" fill="#c8c8c8"/>
<rect x="378" y="218" width="5" height="10" fill="#dadada"/>
<rect x="383" y="218" width="15" height="10" fill="#cfcfcf"/>
<rect x="398" y="218" width="5" height="10" fill="#dadada"/>
<rect x="403" y="218" width="5" height="10" fill="#c8c8c8"/>
<rect x="408" y="218" width="5" height="10" fill="#dadada"/>
<rect x="413" y="218" width="15" height="10" fill="#cfcfcf"/>
<rect x="428" y="218" width="5" height="10" fill="#dadada"/>
<rect x="433" y="218" width="5" height="10" fill="#c8c8c8"/>
<rect x="438" y="218" width="5" height="10" fill="#e0e0e0"/>
<rect x="85" y="228" width="365" height="5" fill="#f3f3f3"/>
<rect x="233" y="228" width="5" height="5" fill="#d8d8d8"/>
<rect x="283" y="228" width="5" height="5" fill="#ececec"/>
<rect x="85" y="233" width="3" height="5" fill="#ffffff"/>
<rect x="88" y="233" width="5" height="5" fill="#cfcfcf"/>
<rect x="93" y="233" width="5" height="5" fill="#e5e5e5"/>
<rect x="98" y="233" width="5" height="5" fill="#cccccc"/>
<rect x="103" y="233" width="5" height="5" fill="#dcdcdc"/>
<rect x="108" y="233" width="5" height="5" fill="#d8d8d8"/>
<rect x="113" y="233" width="5" height="5" fill="#e5e5e5"/>
<rect x="118" y="233" width="5" height="5" fill="#e5e5e5"/>
<rect x="123" y="233" width="5" height="5" fill="#cbcbcb"/>
<rect x="128" y="233" width="5" height="5" fill="#dedede"/>
<rect x="133" y="233" width="5" height="5" fill="#fafafa"/>
<rect x="138" y="233" width="5" height="5" fill="#cfcfcf"/>
<rect x="143" y="233" width="5" height="5" fill="#dedede"/>
<rect x="148" y="233" width="5" height="5" fill="#f8f8f8"/>
<rect x="153" y="233" width="5" height="5" fill="#d0d0d0"/>
<rect x="158" y="233" width="5" height="5" fill="#dcdcdc"/>
<rect x="163" y="233" width="5" height="5" fill="#e5e5e5"/>
<rect x="168" y="233" width="5" height="5" fill="#cbcbcb"/>
<rect x="173" y="233" width="5" height="5" fill="#e8e8e8"/>
<rect x="178" y="233" width="5" height="5" fill="#c8c8c8"/>
<rect x="183" y="233" width="5" height="5" fill="#e5e5e5"/>
<rect x="188" y="233" width="5" height="5" fill="#dcdcdc"/>
<rect x="193" y="233" width="5" height="5" fill="#e5e5e5"/>
<rect x="198" y="233" width="5" height="5" fill="#cdcdcd"/>
<rect x="203" y="233" width="5" height="5" fill="#e0e0e0"/>
<rect x="208" y="233" width="5" height="5" fill="#f8f8f8"/>
<rect x="213" y="233" width="5" height="5" fill="#ffffff"/>
<rect x="218" y="233" width="5" height="5" fill="#c8c8c8"/>
<rect x="223" y="233" width="5" height="5" fill="#cfcfcf"/>
<rect x="228" y="233" width="5" height="5" fill="#e5e5e5"/>
<rect x="233" y="233" width="5" height="5" fill="#d5d5d5"/>
<rect x="238" y="233" width="5" height="5" fill="#dcdcdc"/>
<rect x="243" y="233" width="5" height="5" fill="#cdcdcd"/>
<rect x="248" y="233" width="5" height="5" fill="#dedede"/>
<rect x="253" y="233" width="5" height="5" fill="#e5e5e5"/>
<rect x="258" y="233" width="5" height="5" fill="#fafafa"/>
<rect x="263" y="233" width="5" height="5" fill="#bdbdbd"/>
<rect x="268" y="233" width="5" height="5" fill="#e5e5e5"/>
<rect x="273" y="233" width="5" height="5" fill="#dcdcdc"/>
<rect x="278" y="233" width="5" height="5" fill="#d5d5d5"/>
<rect x="85" y="238" width="3" height="5" fill="#d5d5d5"/>
<rect x="88" y="238" width="5" height="5" fill="#d5d5d5"/>
<rect x="93" y="238" width="5" height="5" fill="#d8d8d8"/>
<rect x="98" y="238" width="5" height="5" fill="#cdcdcd"/>
<rect x="103" y="238" width="5" height="5" fill="#cdcdcd"/>
<rect x="108" y="238" width="5" height="5" fill="#c8c8c8"/>
<rect x="113" y="238" width="5" height="5" fill="#d8d8d8"/>
<rect x="118" y="238" width="5" height="5" fill="#d8d8d8"/>
<rect x="123" y="238" width="5" height="5" fill="#c5c5c5"/>
<rect x="128" y="238" width="5" height="5" fill="#c8c8c8"/>
<rect x="133" y="238" width="5" height="5" fill="#eeeeee"/>
<rect x="138" y="238" width="5" height="5" fill="#d0d0d0"/>
<rect x="143" y="238" width="5" height="5" fill="#b8b8b8"/>
<rect x="148" y="238" width="5" height="5" fill="#ffffff"/>
<rect x="153" y="238" width="5" height="5" fill="#e5e5e5"/>
<rect x="158" y="238" width="5" height="5" fill="#d8d8d8"/>
<rect x="163" y="238" width="5" height="5" fill="#c5c5c5"/>
<rect x="168" y="238" width="5" height="5" fill="#c5c5c5"/>
<rect x="173" y="238" width="5" height="5" fill="#cbcbcb"/>
<rect x="178" y="238" width="5" height="5" fill="#b5b5b5"/>
<rect x="183" y="238" width="5" height="5" fill="#e5e5e5"/>
<rect x="188" y="238" width="5" height="5" fill="#b0b0b0"/>
<rect x="193" y="238" width="5" height="5" fill="#dcdcdc"/>
<rect x="198" y="238" width="5" height="5" fill="#c5c5c5"/>
<rect x="203" y="238" width="5" height="5" fill="#c8c8c8"/>
<rect x="208" y="238" width="5" height="5" fill="#ffffff"/>
<rect x="213" y="238" width="5" height="5" fill="#eeeeee"/>
<rect x="218" y="238" width="5" height="5" fill="#e8e8e8"/>
<rect x="223" y="238" width="5" height="5" fill="#d0d0d0"/>
<rect x="228" y="238" width="5" height="5" fill="#c8c8c8"/>
<rect x="233" y="238" width="5" height="5" fill="#b8b8b8"/>
<rect x="238" y="238" width="5" height="5" fill="#d5d5d5"/>
<rect x="243" y="238" width="5" height="5" fill="#c8c8c8"/>
<rect x="248" y="238" width="5" height="5" fill="#d8d8d8"/>
<rect x="253" y="238" width="5" height="5" fill="#d8d8d8"/>
<rect x="258" y="238" width="5" height="5" fill="#eeeeee"/>
<rect x="263" y="238" width="5" height="5" fill="#d5d5d5"/>
<rect x="268" y="238" width="5" height="5" fill="#e8e8e8"/>
<rect x="273" y="238" width="5" height="5" fill="#b5b5b5"/>
<rect x="278" y="238" width="5" height="5" fill="#cfcfcf"/>
<rect x="283" y="233" width="5" height="5" fill="#e0e0e0"/>
<rect x="283" y="238" width="5" height="5" fill="#dadada"/>
<rect x="288" y="233" width="5" height="10" fill="#dadada"/>
<rect x="293" y="233" width="15" height="10" fill="#cfcfcf"/>
<rect x="308" y="233" width="5" height="10" fill="#dadada"/>
<rect x="313" y="233" width="5" height="10" fill="#c8c8c8"/>
<rect x="318" y="233" width="5" height="10" fill="#dadada"/>
<rect x="323" y="233" width="15" height="10" fill="#cfcfcf"/>
<rect x="338" y="233" width="5" height="10" fill="#dadada"/>
<rect x="343" y="233" width="5" height="10" fill="#c8c8c8"/>
<rect x="348" y="233" width="10" height="10" fill="#d5d5d5"/>
<rect x="358" y="233" width="5" height="10" fill="#e0e0e0"/>
<rect x="373" y="233" width="5" height="10" fill="#c8c8c8"/>
<rect x="378" y="233" width="5" height="10" fill="#dadada"/>
<rect x="383" y="233" width="15" height="10" fill="#cfcfcf"/>
<rect x="398" y="233" width="5" height="10" fill="#dadada"/>
<rect x="403" y="233" width="5" height="10" fill="#c8c8c8"/>
<rect x="408" y="233" width="5" height="10" fill="#dadada"/>
<rect x="413" y="233" width="15" height="10" fill="#cfcfcf"/>
<rect x="428" y="233" width="5" height="10" fill="#dadada"/>
<rect x="433" y="233" width="5" height="10" fill="#c8c8c8"/>
<rect x="438" y="233" width="5" height="10" fill="#e0e0e0"/>
<rect x="604" y="204" width="5" height="5" fill="#c8c8c8"/>
<rect x="604" y="209" width="5" height="5" fill="#dcdcdc"/>
<rect x="609" y="204" width="5" height="5" fill="#cdcdcd"/>
<rect x="609" y="209" width="5" height="5" fill="#dcdcdc"/>
<rect x="614" y="204" width="5" height="5" fill="#dadada"/>
<rect x="614" y="209" width="5" height="5" fill="#dcdcdc"/>
<rect x="619" y="204" width="5" height="5" fill="#dcdcdc"/>
<rect x="619" y="209" width="5" height="5" fill="#dcdcdc"/>
<rect x="624" y="204" width="5" height="5" fill="#c5c5c5"/>
<rect x="624" y="209" width="5" height="5" fill="#dcdcdc"/>
<rect x="629" y="204" width="5" height="5" fill="#cacaca"/>
<rect x="629" y="209" width="5" height="5" fill="#dcdcdc"/>
<rect x="634" y="204" width="5" height="5" fill="#dedede"/>
<rect x="634" y="209" width="5" height="5" fill="#dcdcdc"/>
<rect x="639" y="204" width="5" height="5" fill="#c8c8c8"/>
<rect x="639" y="209" width="5" height="5" fill="#dcdcdc"/>
<rect x="644" y="204" width="5" height="5" fill="#cdcdcd"/>
<rect x="644" y="209" width="5" height="5" fill="#dcdcdc"/>
<rect x="649" y="204" width="5" height="5" fill="#d5d5d5"/>
<rect x="649" y="209" width="5" height="5" fill="#dcdcdc"/>
<rect x="654" y="204" width="5" height="5" fill="#cfcfcf"/>
<rect x="654" y="209" width="5" height="5" fill="#dcdcdc"/>
<rect x="659" y="204" width="5" height="5" fill="#c8c8c8"/>
<rect x="659" y="209" width="5" height="5" fill="#dcdcdc"/>
<rect x="664" y="204" width="5" height="5" fill="#dadada"/>
<rect x="664" y="209" width="5" height="5" fill="#dcdcdc"/>
<rect x="669" y="204" width="5" height="5" fill="#d8d8d8"/>
<rect x="669" y="209" width="5" height="5" fill="#dcdcdc"/>
<rect x="674" y="204" width="5" height="5" fill="#d5d5d5"/>
<rect x="674" y="209" width="5" height="5" fill="#dcdcdc"/>
<rect x="679" y="204" width="5" height="5" fill="#c5c5c5"/>
<rect x="679" y="209" width="5" height="5" fill="#dcdcdc"/>
<rect x="684" y="204" width="5" height="5" fill="#d8d8d8"/>
<rect x="684" y="209" width="5" height="5" fill="#dcdcdc"/>
<rect x="604" y="214" width="126" height="5" fill="#f3f3f3"/>
<rect x="604" y="219" width="5" height="5" fill="#c8c8c8"/>
<rect x="604" y="224" width="5" height="5" fill="#e0e0e0"/>
<rect x="609" y="219" width="5" height="5" fill="#f0f0f0"/>
<rect x="609" y="224" width="5" height="5" fill="#e0e0e0"/>
<rect x="614" y="219" width="5" height="5" fill="#d8d8d8"/>
<rect x="614" y="224" width="5" height="5" fill="#e0e0e0"/>
<rect x="619" y="219" width="5" height="5" fill="#d0d0d0"/>
<rect x="619" y="224" width="5" height="5" fill="#e0e0e0"/>
<rect x="624" y="219" width="5" height="5" fill="#cdcdcd"/>
<rect x="624" y="224" width="5" height="5" fill="#e0e0e0"/>
<rect x="629" y="219" width="5" height="5" fill="#cdcdcd"/>
<rect x="629" y="224" width="5" height="5" fill="#e0e0e0"/>
<rect x="634" y="219" width="5" height="5" fill="#d5d5d5"/>
<rect x="634" y="224" width="5" height="5" fill="#e0e0e0"/>
<rect x="639" y="219" width="5" height="5" fill="#e5e5e5"/>
<rect x="639" y="224" width="5" height="5" fill="#e0e0e0"/>
<rect x="604" y="233" width="5" height="10" fill="#cfcfcf"/>
<rect x="609" y="233" width="5" height="10" fill="#f0f0f0"/>
<rect x="614" y="233" width="5" height="10" fill="#e0e0e0"/>
<rect x="619" y="233" width="5" height="10" fill="#d5d5d5"/>
<rect x="624" y="233" width="5" height="10" fill="#c8c8c8"/>
<rect x="629" y="233" width="5" height="10" fill="#d8d8d8"/>
<rect x="634" y="233" width="5" height="10" fill="#c5c5c5"/>
<rect x="639" y="233" width="5" height="10" fill="#c8c8c8"/>
<rect x="644" y="233" width="5" height="10" fill="#d0d0d0"/>
<rect x="649" y="233" width="5" height="10" fill="#c5c5c5"/>
<rect x="654" y="233" width="5" height="10" fill="#d8d8d8"/>
<rect x="659" y="233" width="5" height="10" fill="#c8c8c8"/>
<rect x="664" y="233" width="5" height="10" fill="#cbcbcb"/>
<rect x="669" y="233" width="5" height="10" fill="#d0d0d0"/>
<rect x="674" y="233" width="5" height="10" fill="#dcdcdc"/>
<rect x="679" y="233" width="5" height="10" fill="#c8c8c8"/>
<rect x="684" y="233" width="5" height="10" fill="#d8d8d8"/>
<rect x="689" y="233" width="5" height="10" fill="#dcdcdc"/>
<rect x="694" y="233" width="5" height="10" fill="#d5d5d5"/>
<rect x="699" y="233" width="5" height="10" fill="#dcdcdc"/>
<rect x="704" y="233" width="5" height="10" fill="#d8d8d8"/>
<rect x="709" y="233" width="5" height="10" fill="#d0d0d0"/>
<rect x="714" y="233" width="5" height="10" fill="#d8d8d8"/>
<rect x="719" y="233" width="5" height="10" fill="#dcdcdc"/>
<rect x="724" y="233" width="5" height="10" fill="#d0d0d0"/>
<rect x="729" y="233" width="5" height="10" fill="#d5d5d5"/>
<rect x="604" y="229" width="126" height="4" fill="#f3f3f3"/>
<rect x="15" y="231" width="68" height="13" fill="#c9ecf9"/>
<rect x="85" y="228" width="370" height="5" fill="#e7f7fd" style="mix-blend-mode:multiply"/>
<rect x="85" y="233" width="370" height="9" fill="#d2ecf4" style="mix-blend-mode:multiply"/>
<rect x="84" y="242" width="371" height="2" fill="#c9ecf9"/>
<rect x="602" y="229" width="132" height="4" fill="#e7f7fd" style="mix-blend-mode:multiply"/>
<rect x="602" y="233" width="132" height="9" fill="#d2ecf4" style="mix-blend-mode:multiply"/>
<rect x="602" y="242" width="132" height="2" fill="#c9ecf9"/>
<rect x="14" y="245" width="798" height="1" fill="#d0d0d0"/>
<rect x="233" y="228" width="5" height="5" fill="#c4d8de"/>
<path d="M233.5 242.5 Q236 243.5 237.5 242" fill="none" stroke="#555" stroke-width="1"/>
<rect x="735" y="231" width="76" height="13" fill="#c9ecf9"/>
<rect x="455.5" y="169.5" width="146" height="15" fill="#efefef" stroke="#d2d2d2" stroke-width="1"/>
<rect x="882.5" y="170.5" width="82" height="14" fill="#efefef" stroke="#d2d2d2" stroke-width="1"/>
<rect x="840.5" y="171.5" width="12" height="12" fill="#fff" stroke="#c8c8c8" stroke-width="1"/>
<path d="M841.8 177.3 L844.5 180.3 L850.6 174.2" fill="none" stroke="#b4b4b4" stroke-width="1.2"/>
<rect x="973.5" y="171.5" width="12" height="12" fill="#fff" stroke="#c8c8c8" stroke-width="1"/>
<rect x="455.5" y="184.5" width="146" height="15" fill="#efefef" stroke="#d2d2d2" stroke-width="1"/>
<rect x="882.5" y="185.5" width="82" height="14" fill="#efefef" stroke="#d2d2d2" stroke-width="1"/>
<rect x="840.5" y="186.5" width="12" height="12" fill="#fff" stroke="#c8c8c8" stroke-width="1"/>
<path d="M841.8 192.3 L844.5 195.3 L850.6 189.2" fill="none" stroke="#b4b4b4" stroke-width="1.2"/>
<rect x="973.5" y="186.5" width="12" height="12" fill="#fff" stroke="#c8c8c8" stroke-width="1"/>
<rect x="455.5" y="199.5" width="146" height="15" fill="#efefef" stroke="#d2d2d2" stroke-width="1"/>
<rect x="882.5" y="200.5" width="82" height="14" fill="#efefef" stroke="#d2d2d2" stroke-width="1"/>
<rect x="840.5" y="201.5" width="12" height="12" fill="#fff" stroke="#c8c8c8" stroke-width="1"/>
<path d="M841.8 207.3 L844.5 210.3 L850.6 204.2" fill="none" stroke="#b4b4b4" stroke-width="1.2"/>
<rect x="973.5" y="201.5" width="12" height="12" fill="#fff" stroke="#c8c8c8" stroke-width="1"/>
<rect x="455.5" y="214.5" width="146" height="15" fill="#efefef" stroke="#d2d2d2" stroke-width="1"/>
<rect x="882.5" y="215.5" width="82" height="14" fill="#efefef" stroke="#d2d2d2" stroke-width="1"/>
<rect x="840.5" y="216.5" width="12" height="12" fill="#fff" stroke="#c8c8c8" stroke-width="1"/>
<path d="M841.8 222.3 L844.5 225.3 L850.6 219.2" fill="none" stroke="#b4b4b4" stroke-width="1.2"/>
<rect x="973.5" y="216.5" width="12" height="12" fill="#fff" stroke="#c8c8c8" stroke-width="1"/>
<rect x="455.5" y="229.5" width="146" height="16" fill="#efefef" stroke="#d2d2d2" stroke-width="1"/>
<rect x="882.5" y="230.5" width="82" height="15" fill="#efefef" stroke="#d2d2d2" stroke-width="1"/>
<rect x="840.5" y="231.5" width="12" height="12" fill="#fff" stroke="#c4e4f2" stroke-width="1"/>
<path d="M841.8 237.3 L844.5 240.3 L850.6 234.2" fill="none" stroke="#b4b4b4" stroke-width="1.2"/>
<rect x="973.5" y="231.5" width="12" height="12" fill="#fff" stroke="#c4e4f2" stroke-width="1"/>
<path d="M974.8 237.3 L977.5 240.3 L983.6 234.2" fill="none" stroke="#b4b4b4" stroke-width="1.2"/>
</svg>
<div class="t cell" style="left:15px;top:172px">S-2190</div>
<div class="t cell" style="left:457px;top:172px">Enviado e com ocorrência</div>
<div class="t cell" style="left:736px;top:172px">09/10/2020</div>
<div class="t cell" style="left:15px;top:187px">S-2190</div>
<div class="t cell" style="left:457px;top:187px">Enviado e com ocorrência</div>
<div class="t cell" style="left:736px;top:187px">09/10/2020</div>
<div class="t cell" style="left:15px;top:202px">S-2190</div>
<div class="t cell" style="left:457px;top:202px">Excluído</div>
<div class="t cell" style="left:736px;top:202px">13/10/2020</div>
<div class="t cell" style="left:15px;top:217px">S-2190</div>
<div class="t cell" style="left:457px;top:217px">Excluído</div>
<div class="t cell" style="left:736px;top:217px">14/10/2020</div>
<div class="t cell" style="left:15px;top:232px">S-2190</div>
<div class="t cell" style="left:457px;top:232px">Enviado e registrado</div>
<div class="t cell" style="left:736px;top:232px">14/10/2020</div>
<div class="t cell" style="left:729px;top:232px">1</div>
<!--/ROWS-->

<!-- Log group -->
<div style="left:9px;top:476px;width:1002px;height:91px;border:1px solid #a8a8a8;box-shadow:inset 1px 1px 0 #fff, 1px 1px 0 #fff"></div>
<div class="t b" style="left:13px;top:471px;background:#eeeeee;padding:0 2px;font-size:11.5px">Log</div>
<div style="left:13px;top:484px;width:996px;height:77px;background:#fff;border:1px solid #bdbdbd;box-shadow:inset -1px 0 0 #fff"></div>
<div style="left:991px;top:486px;width:16px;height:73px;background:#efefef"></div>
<svg style="position:absolute;left:994px;top:491px" width="10" height="9"><path d="M1.6 6.2 L4.5 3 L7.4 6.2" fill="none" stroke="#c2c2c2" stroke-width="2.3"/></svg>
<svg style="position:absolute;left:994px;top:546px" width="10" height="9"><path d="M1.6 2.2 L4.5 5.4 L7.4 2.2" fill="none" stroke="#c2c2c2" stroke-width="2.3"/></svg>

<!-- eSocial button -->
<div style="left:15px;top:580px;width:103px;height:20px;background:#cbcbcb;border:1px solid #b5b5b5"></div>
<div class="t" style="left:15px;top:584px;width:103px;text-align:center;color:#777"><u>e</u>Social</div>

<!-- toast -->
<div style="left:212px;top:259px;width:818px;height:140px;background:#29b3c4;border-top:1px solid #e2e2e2;border-left:1px solid #e2e2e2;border-right:1px solid #6a6a6a;border-bottom:1px solid #6a6a6a;box-shadow:inset 2px 2px 0 #fff, inset -1px -1px 0 #a2a2a2, inset -2px -2px 0 #f2ecec"></div>
<svg style="position:absolute;left:271px;top:311px" width="36" height="36" viewBox="0 0 36 36">
  <circle cx="18.3" cy="18.2" r="15.6" fill="none" stroke="#fff" stroke-width="2"/>
  <circle cx="18.3" cy="9.8" r="1.4" fill="#fff"/>
  <path d="M16 14.5 H18.8 V26.5 M14.5 26.5 H23" fill="none" stroke="#fff" stroke-width="2"/>
</svg>
<div style="left:343px;top:319px;font-size:17.5px;line-height:22px;color:#fff;white-space:nowrap;letter-spacing:0.42px">Registro S-3000 gerado com sucesso!</div>
<svg style="position:absolute;left:1002px;top:269px" width="16" height="16"><path d="M1.5 1.5 L14.5 14.5 M14.5 1.5 L1.5 14.5" stroke="#fff" stroke-width="2.2"/></svg>
<div style="left:949px;top:366px;font-size:15px;line-height:18px;color:#fff;white-space:nowrap;text-decoration:underline;letter-spacing:0.1px;text-underline-offset:1.5px;text-decoration-thickness:1px">Ajuda ?</div>
</body></html>
